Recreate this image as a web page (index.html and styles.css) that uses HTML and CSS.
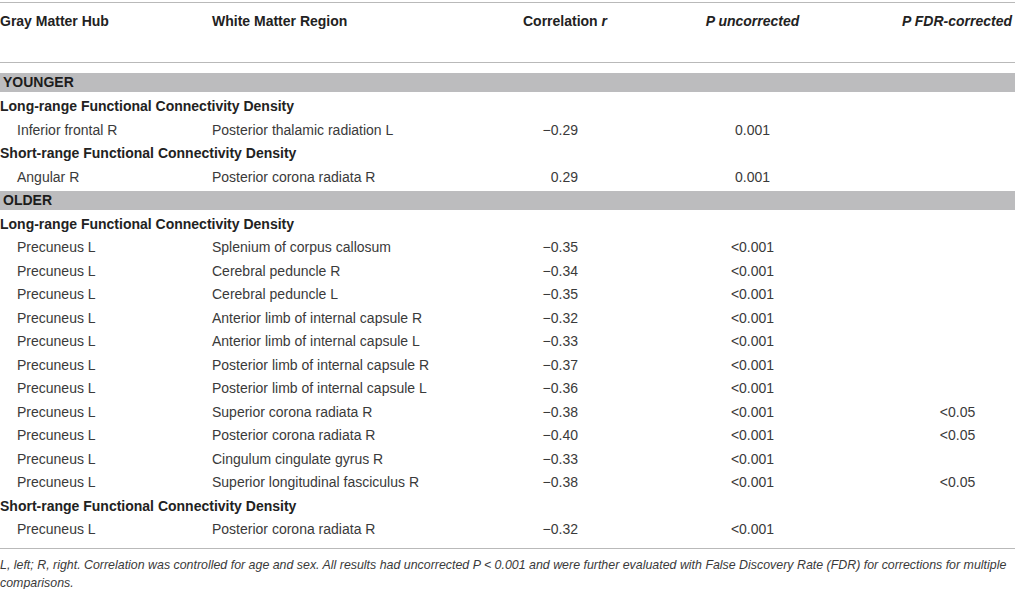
FILE: index.html
```html
<!DOCTYPE html>
<html lang="en">
<head>
  <meta charset="UTF-8">
  <title>Gray matter hubs and white matter correlations</title>
  <link rel="stylesheet" href="styles.css">
</head>
<body>
  <div class="table-wrap">
    <table class="data-table">
      <colgroup>
        <col class="col-hub">
        <col class="col-region">
        <col class="col-r">
        <col class="col-p">
        <col class="col-fdr">
      </colgroup>
      <thead>
        <tr>
          <th>Gray Matter Hub</th>
          <th>White Matter Region</th>
          <th class="num">Correlation <i>r</i></th>
          <th class="num"><i>P uncorrected</i></th>
          <th class="fdr"><i>P FDR-corrected</i></th>
        </tr>
      </thead>
      <tbody>
        <tr class="spacer"><td colspan="5"></td></tr>
        <tr class="group"><td colspan="5"><div class="bar">YOUNGER</div></td></tr>
        <tr class="sub"><td colspan="5">Long-range Functional Connectivity Density</td></tr>
        <tr><td class="hub">Inferior frontal R</td><td>Posterior thalamic radiation L</td><td class="r">−0.29</td><td class="p">0.001</td><td class="fdr"></td></tr>
        <tr class="sub"><td colspan="5">Short-range Functional Connectivity Density</td></tr>
        <tr><td class="hub">Angular R</td><td>Posterior corona radiata R</td><td class="r">0.29</td><td class="p">0.001</td><td class="fdr"></td></tr>
        <tr class="group"><td colspan="5"><div class="bar">OLDER</div></td></tr>
        <tr class="sub"><td colspan="5">Long-range Functional Connectivity Density</td></tr>
        <tr><td class="hub">Precuneus L</td><td>Splenium of corpus callosum</td><td class="r">−0.35</td><td class="p">&lt;0.001</td><td class="fdr"></td></tr>
        <tr><td class="hub">Precuneus L</td><td>Cerebral peduncle R</td><td class="r">−0.34</td><td class="p">&lt;0.001</td><td class="fdr"></td></tr>
        <tr><td class="hub">Precuneus L</td><td>Cerebral peduncle L</td><td class="r">−0.35</td><td class="p">&lt;0.001</td><td class="fdr"></td></tr>
        <tr><td class="hub">Precuneus L</td><td>Anterior limb of internal capsule R</td><td class="r">−0.32</td><td class="p">&lt;0.001</td><td class="fdr"></td></tr>
        <tr><td class="hub">Precuneus L</td><td>Anterior limb of internal capsule L</td><td class="r">−0.33</td><td class="p">&lt;0.001</td><td class="fdr"></td></tr>
        <tr><td class="hub">Precuneus L</td><td>Posterior limb of internal capsule R</td><td class="r">−0.37</td><td class="p">&lt;0.001</td><td class="fdr"></td></tr>
        <tr><td class="hub">Precuneus L</td><td>Posterior limb of internal capsule L</td><td class="r">−0.36</td><td class="p">&lt;0.001</td><td class="fdr"></td></tr>
        <tr><td class="hub">Precuneus L</td><td>Superior corona radiata R</td><td class="r">−0.38</td><td class="p">&lt;0.001</td><td class="fdr">&lt;0.05</td></tr>
        <tr><td class="hub">Precuneus L</td><td>Posterior corona radiata R</td><td class="r">−0.40</td><td class="p">&lt;0.001</td><td class="fdr">&lt;0.05</td></tr>
        <tr><td class="hub">Precuneus L</td><td>Cingulum cingulate gyrus R</td><td class="r">−0.33</td><td class="p">&lt;0.001</td><td class="fdr"></td></tr>
        <tr><td class="hub">Precuneus L</td><td>Superior longitudinal fasciculus R</td><td class="r">−0.38</td><td class="p">&lt;0.001</td><td class="fdr">&lt;0.05</td></tr>
        <tr class="sub"><td colspan="5">Short-range Functional Connectivity Density</td></tr>
        <tr><td class="hub">Precuneus L</td><td>Posterior corona radiata R</td><td class="r">−0.32</td><td class="p">&lt;0.001</td><td class="fdr"></td></tr>
        <tr class="end"><td colspan="5"></td></tr>
      </tbody>
    </table>
    <p class="footnote"><i>L, left; R, right. Correlation was controlled for age and sex. All results had uncorrected P &lt; 0.001 and were further evaluated with False Discovery Rate (FDR) for corrections for multiple comparisons.</i></p>
  </div>
</body>
</html>
```

FILE: styles.css
```css
body {
  margin: 0;
  padding: 0;
  background-color: #fff;
  font-family: "Liberation Sans", Arial, sans-serif;
  font-size: 14px;
  color: #3a3a3a;
}
.table-wrap {
  width: 1015px;
  padding-top: 2px;
}
.data-table {
  width: 1015px;
  border-collapse: collapse;
  table-layout: fixed;
}
.col-hub { width: 212px; }
.col-region { width: 258px; }
.col-r { width: 190px; }
.col-p { width: 185px; }
.col-fdr { width: 170px; }

th {
  height: 60px;
  padding: 9px 0 0 0;
  vertical-align: top;
  text-align: left;
  font-weight: bold;
  color: #222;
  line-height: 18px;
  border-top: 1px solid #b9b9b9;
  border-bottom: 1px solid #b9b9b9;
  box-sizing: border-box;
}
th.num {
  text-align: center;
}
th.fdr {
  text-align: right;
  padding-right: 3px;
}
td {
  height: 23.5px;
  padding: 0;
  line-height: 16px;
  vertical-align: middle;
  white-space: nowrap;
}
.spacer td {
  height: 8px;
}
.end td {
  height: 7px;
  border-bottom: 1px solid #b9b9b9;
}
.group td {
  height: 19px;
  padding: 2px 0 2.5px;
}
.bar {
  height: 19px;
  line-height: 19px;
  padding-left: 3px;
  background-color: #bcbcbe;
  font-weight: bold;
  color: #1c1c1c;
}
.sub td {
  font-weight: bold;
  color: #222;
}
td.hub {
  padding-left: 17px;
}
td.r {
  text-align: right;
  padding-right: 82px;
}
td.p {
  text-align: center;
}
td.fdr {
  text-align: center;
  padding-left: 55px;
}
.footnote {
  margin: 0;
  padding-top: 7px;
  font-size: 12.4px;
  line-height: 18px;
  color: #3a3a3a;
}
```
